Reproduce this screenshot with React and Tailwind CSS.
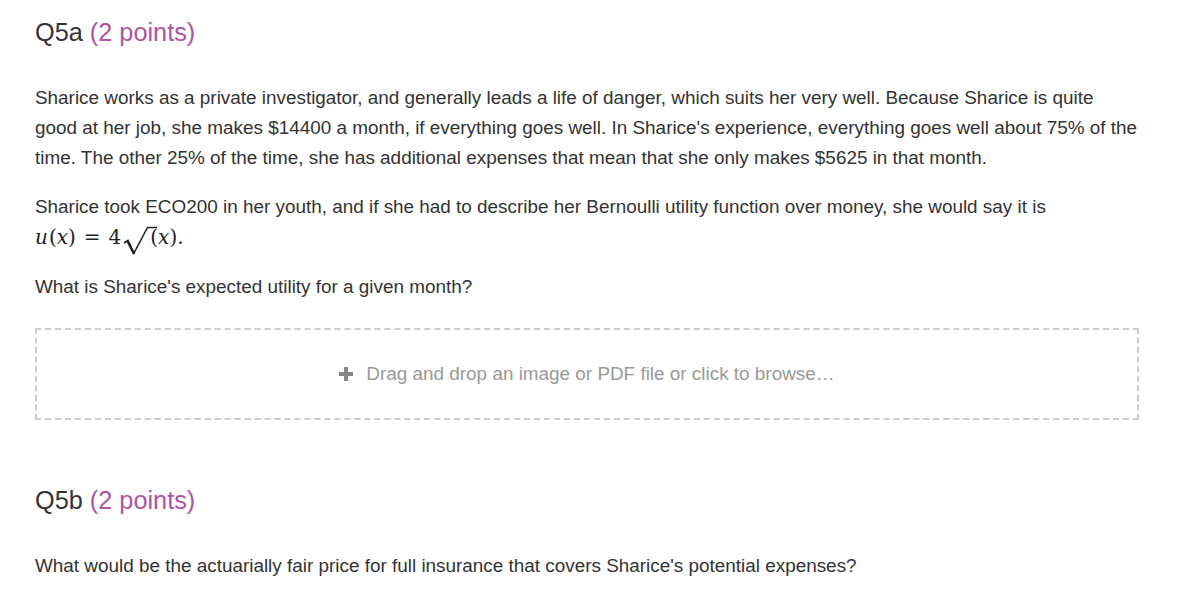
export default function App() {
  const sans = { fontFamily: '"Liberation Sans", Arial, sans-serif' };
  const serif = { fontFamily: '"DejaVu Serif", "Liberation Serif", serif' };
  return (
    <div className="w-[1197px] h-[595px] bg-white overflow-hidden text-[#333]" style={sans}>
      <div className="pl-[35px] pr-[58px] pt-[16px]">
        <h2 className="text-[25.3px] leading-[32px] font-normal text-[#333]">
          Q5a <span className="text-[#b0549d]">(2 points)</span>
        </h2>
        <div className="mt-[35px] text-[18.9px] leading-[30px]">
          <p>
            Sharice works as a private investigator, and generally leads a life of danger, which suits her very well. Because Sharice is quite good at her job, she makes $14400 a month, if everything goes well. In Sharice's experience, everything goes well about 75% of the time. The other 25% of the time, she has additional expenses that mean that she only makes $5625 in that month.
          </p>
          <p className="mt-[19px]">
            Sharice took ECO200 in her youth, and if she had to describe her Bernoulli utility function over money, she would say it is
            <br />
            <span className="text-[20px] inline-flex items-baseline text-[#222]" style={serif}>
              <i>u</i>
              <span className="ml-[1px]">(</span>
              <i>x</i>
              <span>)</span>
              <span className="mx-[8px]">=</span>
              <span>4</span>
              <svg className="ml-[2px] self-end mb-[-4px]" width="34" height="30" viewBox="0 0 34 30">
                <path d="M1 17 L5 14.5 L11 27 L24.5 1.5 L34 1.5" fill="none" stroke="#222" strokeWidth="1.6" />
                <path d="M4.5 15 L11 28" fill="none" stroke="#222" strokeWidth="2.4" />
              </svg>
              <span className="ml-[-7px]">(</span>
              <i>x</i>
              <span>)</span>
              <span>.</span>
            </span>
          </p>
          <p className="mt-[19px]">What is Sharice's expected utility for a given month?</p>
        </div>
        <div className="mt-[26px] h-[92px] border-2 border-dashed border-[#ccc] flex items-center justify-center text-[18.9px] text-[#999]">
          <span className="mr-[13px]">
            <svg width="14" height="14" viewBox="0 0 14 14"><path d="M5 0h4v5h5v4H9v5H5V9H0V5h5z" fill="#888" /></svg>
          </span>
          Drag and drop an image or PDF file or click to browse…
        </div>
        <h2 className="mt-[64px] text-[25.3px] leading-[32px] font-normal text-[#333]">
          Q5b <span className="text-[#b0549d]">(2 points)</span>
        </h2>
        <p className="mt-[35px] text-[18.9px] leading-[30px]">
          What would be the actuarially fair price for full insurance that covers Sharice's potential expenses?
        </p>
      </div>
    </div>
  );
}
